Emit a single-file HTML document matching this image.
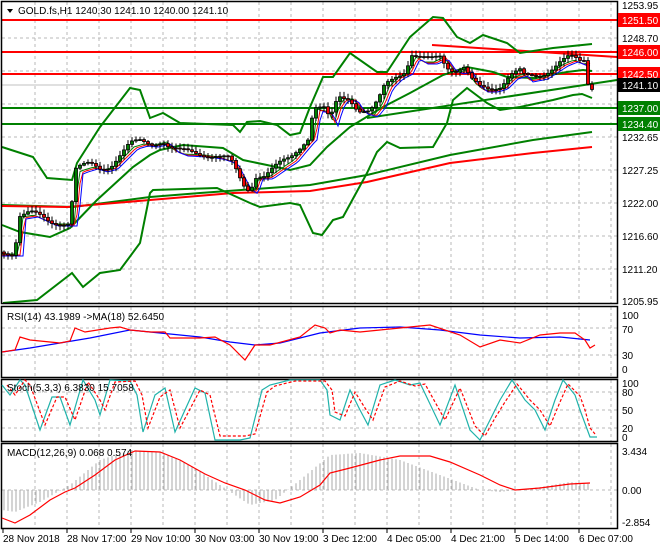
<!DOCTYPE html>
<html><head><meta charset="utf-8"><style>
body{margin:0;background:#fff;width:660px;height:550px;overflow:hidden;font-family:"Liberation Sans",sans-serif}
svg{position:absolute;left:0;top:0}
text{font-family:"Liberation Sans",sans-serif;font-size:10px;fill:#000}
</style></head><body>
<svg id="s" width="660" height="550" xmlns="http://www.w3.org/2000/svg">
<rect width="660" height="550" fill="#fff"/>
<g id="grid" stroke="#b8b8b8" stroke-dasharray="3,3" stroke-width="1"></g>
<g stroke-width="2">
<line x1="2" y1="20" x2="617" y2="20" stroke="#f00"/>
<line x1="2" y1="52" x2="617" y2="52" stroke="#f00"/>
<line x1="2" y1="74" x2="617" y2="74" stroke="#f00"/>
<line x1="2" y1="108" x2="617" y2="108" stroke="#008000"/>
<line x1="2" y1="124" x2="617" y2="124" stroke="#008000"/>
</g>
<line x1="2" y1="85" x2="617" y2="85" stroke="#c0c0c0"/>
<polyline points="432,45 617,57" stroke="#f00" stroke-width="2" fill="none"/>
<polyline points="367,118 617,80" stroke="#008000" stroke-width="2" fill="none"/>
<polyline fill="none" stroke="#008000" stroke-width="2" points="2,205 73,207 150,197 200,193 310,185 367,175 450,155 533,140 592,132"/>
<polyline fill="none" stroke="#f00" stroke-width="2" points="2,206 67,207 150,200 233,193 310,191 367,182 450,163 533,153 592,147"/>
<polyline fill="none" stroke="#008000" stroke-width="2" points="2,147 33,157 47,178 72,180 77,163 100,127 130,88 140,90 150,118 163,113 180,123 233,125 240,132 247,122 260,121 277,125 290,135 300,133 310,107 323,77 333,77 350,53 377,72 387,72 410,37 433,17 443,18 457,37 470,43 483,35 507,43 520,53 553,48 592,44"/>
<polyline fill="none" stroke="#008000" stroke-width="2" points="3,303 37,300 72,273 83,287 100,273 120,270 140,243 150,193 153,190 217,188 250,203 260,207 290,203 300,205 313,233 322,235 333,220 343,217 367,173 377,152 387,142 400,148 433,147 447,123 453,100 467,88 487,103 500,110 520,107 553,100 573,95 582,94 592,98"/>
<polyline fill="none" stroke="#008000" stroke-width="2" points="2,225 20,232 50,237 70,228 97,200 133,167 150,155 160,150 183,145 223,148 243,160 267,165 290,170 310,165 327,147 350,127 383,107 410,93 443,75 467,67 493,72 507,77 533,78 567,72 583,70 592,71"/>
<g id="mas" fill="none" stroke-width="1"></g>
<g id="candles"></g>
<g fill="none" stroke="#000" stroke-width="1.5">
<rect x="1.5" y="1.5" width="616" height="302"/>
<rect x="1.5" y="306.5" width="616" height="71"/>
<rect x="1.5" y="379.5" width="616" height="62"/>
<rect x="1.5" y="443.5" width="616" height="85"/>
</g>
<polyline fill="none" stroke="#00f" stroke-width="1.2" points="2,352 30,348 60,343 90,338 130,330 160,333 200,337 230,342 255,345 280,343 320,333 360,328 400,327 440,330 480,335 520,338 560,337 590,340"/>
<polyline fill="none" stroke="#f00" stroke-width="1.2" points="2,352 15,350 20,337 30,340 60,343 70,341 75,328 85,332 110,328 120,327 130,330 150,332 165,332 170,338 200,338 215,337 230,345 245,360 255,345 270,345 300,337 315,325 325,328 330,333 340,330 360,332 380,330 400,328 430,325 460,335 480,347 500,340 520,343 540,335 560,333 575,333 585,340 590,348 595,345"/>
<polyline fill="none" stroke="#20b2aa" stroke-width="1.2" points="2,385 10,395 20,380 25,385 40,430 52,397 60,397 70,425 83,380 95,400 100,415 110,380 130,381 137,395 143,432 155,395 165,388 175,432 195,388 205,393 215,440 240,440 250,438 262,390 270,385 290,380 320,380 327,390 330,415 340,420 350,390 360,410 368,425 380,385 395,380 410,385 420,383 440,425 455,385 470,430 480,440 490,420 500,400 512,380 525,400 535,410 545,430 555,400 563,380 575,395 580,410 590,437 597,437"/>
<polyline fill="none" stroke="#f00" stroke-width="1.2" stroke-dasharray="3,2" transform="translate(5,0)" points="2,385 10,395 20,380 25,385 40,425 52,397 60,397 70,420 83,382 95,400 100,410 110,382 130,381 137,395 143,428 155,397 165,390 175,428 195,390 205,395 215,436 240,436 250,434 262,392 270,386 290,381 320,381 327,390 330,412 340,416 350,392 360,408 368,420 380,387 395,381 410,386 420,384 440,420 455,388 470,426 480,436 490,418 500,402 512,384 525,400 535,410 545,426 555,402 563,384 575,396 580,410 585,428 590,434"/>
<g id="hist" stroke="#aaa" stroke-width="1"></g>
<polyline fill="none" stroke="#f00" stroke-width="1.2" points="2,518 15,523 30,515 50,500 65,492 75,488 95,475 115,460 135,451 160,452 180,460 205,474 225,483 245,490 265,500 280,503 300,497 320,485 330,473 350,468 380,460 400,456 430,456 450,462 480,475 500,485 515,490 540,488 570,484 590,483"/>
<g>
<text x="622" y="9">1253.95</text>
<text x="622" y="42">1248.70</text>
<text x="622" y="141">1232.65</text>
<text x="622" y="174">1227.25</text>
<text x="622" y="207">1222.00</text>
<text x="622" y="240">1216.60</text>
<text x="622" y="273">1211.20</text>
<text x="622" y="305">1205.95</text>
<text x="622" y="319">100</text><text x="622" y="333">70</text><text x="622" y="359">30</text><text x="622" y="373">0</text>
<text x="622" y="387">100</text><text x="622" y="396">80</text><text x="622" y="414">50</text><text x="622" y="432">20</text><text x="622" y="441">0</text>
<text x="622" y="455">3.434</text><text x="622" y="494">0.00</text><text x="622" y="526">-2.854</text>
</g>
<g>
<rect x="618" y="13" width="42" height="14" fill="#f00"/><text x="622" y="24" style="fill:#fff">1251.50</text>
<rect x="618" y="45" width="42" height="14" fill="#f00"/><text x="622" y="56" style="fill:#fff">1246.00</text>
<rect x="618" y="67" width="42" height="14" fill="#f00"/><text x="622" y="78" style="fill:#fff">1242.50</text>
<rect x="618" y="78" width="42" height="14" fill="#000"/><text x="622" y="89" style="fill:#fff">1241.10</text>
<rect x="618" y="101" width="42" height="14" fill="#008000"/><text x="622" y="112" style="fill:#fff">1237.00</text>
<rect x="618" y="117" width="42" height="14" fill="#008000"/><text x="622" y="128" style="fill:#fff">1234.40</text>
</g>
<g id="ticks" stroke="#000"></g>
<g>
<text x="3" y="542">28 Nov 2018</text><text x="67" y="542">28 Nov 17:00</text><text x="131" y="542">29 Nov 10:00</text><text x="195" y="542">30 Nov 03:00</text><text x="259" y="542">30 Nov 19:00</text><text x="323" y="542">3 Dec 12:00</text><text x="387" y="542">4 Dec 05:00</text><text x="451" y="542">4 Dec 21:00</text><text x="515" y="542">5 Dec 14:00</text><text x="579" y="542">6 Dec 07:00</text>
</g>
<polygon points="7,9 13,9 10,13" fill="#000"/>
<text x="18" y="14">GOLD.fs,H1  1240.30 1241.10 1240.00 1241.10</text>
<text x="7" y="320">RSI(14) 43.1989  -&gt;MA(18) 52.6450</text>
<text x="7" y="391">Stoch(5,3,3) 6.3830 15.7058</text>
<text x="7" y="456">MACD(12,26,9) 0.068 0.574</text>
</svg>
<script>
var NS="http://www.w3.org/2000/svg";
function el(p,t,a){var e=document.createElementNS(NS,t);for(var k in a)e.setAttribute(k,a[k]);document.getElementById(p).appendChild(e);}
for(var gx=35;gx<617;gx+=32){[[2,303],[307,377],[380,441],[444,528]].forEach(function(r){el("grid","line",{x1:gx,y1:r[0],x2:gx,y2:r[1]});});}
[38,71,104,137,170,203,236,269].forEach(function(y){el("grid","line",{x1:2,y1:y,x2:617,y2:y});});
[328,355,392,410,428,490].forEach(function(y){el("grid","line",{x1:2,y1:y,x2:617,y2:y});});
for(var tx=3;tx<600;tx+=64){el("ticks","line",{x1:tx,y1:528,x2:tx,y2:533});}
var P=[[2,252],[15,252],[18,215],[30,213],[50,222],[70,222],[75,170],[80,168],[90,165],[100,168],[110,165],[130,145],[140,142],[150,143],[163,140],[170,148],[180,152],[200,153],[215,155],[230,160],[243,185],[250,190],[255,175],[265,175],[275,168],[290,158],[305,140],[310,135],[313,107],[325,110],[330,122],[335,105],[340,97],[350,97],[355,105],[360,110],[370,113],[378,103],[385,85],[395,75],[405,70],[412,55],[420,60],[430,60],[440,55],[447,65],[455,70],[465,68],[470,80],[480,88],[490,88],[500,85],[510,75],[520,72],[525,78],[540,75],[560,62],[570,58],[580,62],[585,60],[587,80],[590,87],[593,86]];
function f(x){for(var i=0;i<P.length-1;i++){if(x<=P[i+1][0]){var t=(x-P[i][0])/(P[i+1][0]-P[i][0]);return P[i][1]+t*(P[i+1][1]-P[i][1]);}}return P[P.length-1][1];}
function ma(off,lag){var s="";for(var x=2;x<=592;x+=3){s+=x+","+(f(Math.max(2,x-lag))+off)+" ";}return s;}
el("mas","polyline",{points:ma(2,4),stroke:"#008000"});
el("mas","polyline",{points:ma(3,6),stroke:"#f00"});
el("mas","polyline",{points:ma(4,8),stroke:"#00f"});
var prev=f(3);
for(var cx=4;cx<=592;cx+=4){var c=f(cx)+Math.sin(cx*1.7)*3.5,o=prev;prev=c;var hi=Math.min(o,c)-1-Math.abs(Math.sin(cx*3.1))*4,lo=Math.max(o,c)+1+Math.abs(Math.cos(cx*2.3))*4;
el("candles","line",{x1:cx,y1:hi,x2:cx,y2:lo,stroke:"#000","stroke-width":1});
var by=Math.min(o,c),bh=Math.max(1,Math.abs(o-c));
el("candles","rect",{x:cx-1.5,y:by,width:3,height:bh,fill:c<o?"#008000":"#e00",stroke:"#000","stroke-width":0.8});}
var M=[[2,20],[15,22],[40,12],[70,-5],[100,-30],[130,-40],[160,-38],[190,-25],[220,-5],[250,15],[275,10],[300,-10],[330,-35],[360,-37],[400,-30],[440,-15],[480,0],[500,2],[540,-3],[570,-8],[590,-6]];
function g(x){for(var i=0;i<M.length-1;i++){if(x<=M[i+1][0]){var t=(x-M[i][0])/(M[i+1][0]-M[i][0]);return M[i][1]+t*(M[i+1][1]-M[i][1]);}}return 0;}
for(var hx=4;hx<=592;hx+=4){el("hist","line",{x1:hx,y1:490,x2:hx,y2:490+g(hx)});}
</script>
</body></html>
